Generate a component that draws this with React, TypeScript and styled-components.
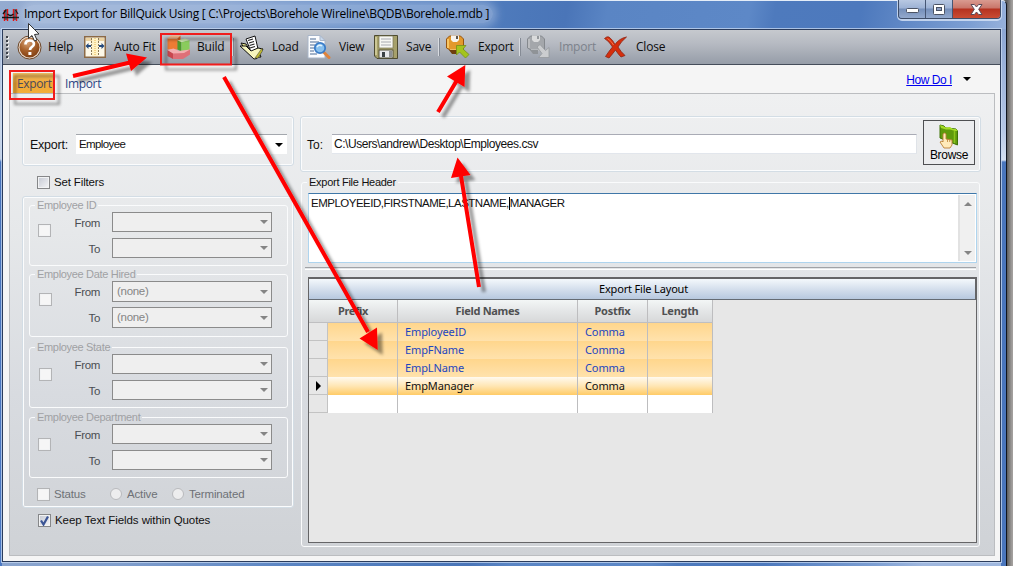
import { FC, ReactNode } from "react";
import styled, { createGlobalStyle, css } from "styled-components";

const segoe = `"Open Sans", "Noto Sans", sans-serif`;
const tahoma = `"Noto Sans", "Open Sans", sans-serif`;
const arial = `"Liberation Sans", Arial, sans-serif`;

const filters = [
  { title: "Employee ID", value: "", size: 20, height: 67, after: 2, box: 8, drop: 12 },
  { title: "Employee Date Hired", value: "(none)", size: 21, height: 69, after: 4, box: 9, drop: 12 },
  { title: "Employee State", value: "", size: 20, height: 67, after: 3, box: 9, drop: 14 },
  { title: "Employee Department", value: "", size: 20, height: 67, after: 9, box: 8, drop: 14 },
];

const fields = [
  { name: "EmployeeID", postfix: "Comma" },
  { name: "EmpFName", postfix: "Comma" },
  { name: "EmpLName", postfix: "Comma" },
  { name: "EmpManager", postfix: "Comma", current: true },
];

const App: FC = () => (
  <>
    <GlobalStyle />
    <Desktop>
      <Window>
        <TitleBar>
          <AppIcon />
          <Title>
            Import Export for BillQuick Using [ C:\Projects\Borehole
            Wireline\BQDB\Borehole.mdb ]
          </Title>
          <WindowButtons />
        </TitleBar>
        <Client>
          <Toolbar>
            <Grip>
              {[0, 1, 2, 3, 4, 5].map((dot) => (
                <GripDot key={dot} />
              ))}
            </Grip>
            <Tool width={67} gap={6} icon={<HelpIcon />} label="Help" />
            <Tool width={83} icon={<AutoFitIcon />} label="Auto Fit" />
            <Tool width={66} gap={6} icon={<BuildIcon />} label="Build" />
            <Separator />
            <Tool width={67} icon={<LoadIcon />} label="Load" />
            <Tool width={67} icon={<ViewIcon />} label="View" />
            <Tool width={65} icon={<SaveIcon />} label="Save" />
            <Separator />
            <Tool width={74} icon={<TransferIcon />} label="Export" />
            <Separator />
            <Tool width={77} icon={<TransferIcon disabled />} label="Import" disabled />
            <Tool width={67} icon={<CloseIcon />} label="Close" />
          </Toolbar>
          <Tabs>
            <Tab $active>Export</Tab>
            <Tab>Import</Tab>
            <HowDoI>How Do I</HowDoI>
            <Caret />
          </Tabs>
          <Panel>
            <LeftColumn>
              <Group $height={50}>
                <ExportLabel>Export:</ExportLabel>
                <ExportCombo>
                  Employee
                  <Caret />
                </ExportCombo>
              </Group>
              <CheckRow $top={10} $left={15} $bottom={7}>
                <Box $enabled />
                <Label $track={-0.15}>Set Filters</Label>
              </CheckRow>
              <FilterGroup>
                {filters.map((filter) => (
                  <FieldSet key={filter.title} $height={filter.height} $after={filter.after}>
                    <Legend $muted>{filter.title}</Legend>
                    <Range>
                      <RangeCheck $left={filter.box} $top={filter.drop}>
                        <Box />
                      </RangeCheck>
                      <RangeRows $size={filter.size}>
                        <RangeLabel>From</RangeLabel>
                        <Select>
                          {filter.value}
                          <Caret $muted />
                        </Select>
                        <RangeLabel>To</RangeLabel>
                        <Select>
                          {filter.value}
                          <Caret $muted />
                        </Select>
                      </RangeRows>
                    </Range>
                  </FieldSet>
                ))}
                <StatusRow>
                  <Box />
                  <StatusLabel $width={60}>Status</StatusLabel>
                  <Radio />
                  <StatusLabel $width={50}>Active</StatusLabel>
                  <Radio />
                  <StatusLabel $width={62}>Terminated</StatusLabel>
                </StatusRow>
              </FilterGroup>
              <CheckRow $top={6} $left={16} $bottom={0}>
                <Box $enabled>
                  <CheckMark />
                </Box>
                <Label $track={-0.08}>Keep Text Fields within Quotes</Label>
              </CheckRow>
            </LeftColumn>
            <RightColumn>
              <Group $height={56}>
                <ToLabel>To:</ToLabel>
                <PathInput>C:\Users\andrew\Desktop\Employees.csv</PathInput>
                <BrowseButton>
                  <BrowseIcon />
                  Browse
                </BrowseButton>
              </Group>
              <HeaderFieldSet>
                <Legend>Export File Header</Legend>
                <HeaderText>
                  <HeaderValue>
                    EMPLOYEEID,FIRSTNAME,LASTNAME,
                    <TextCaret />
                    MANAGER
                  </HeaderValue>
                  <ScrollBar>
                    <ScrollArrow $up />
                    <ScrollArrow />
                  </ScrollBar>
                </HeaderText>
                <Divider />
                <LayoutGrid>
                  <GridTitle>Export File Layout</GridTitle>
                  <GridHeader>
                    <HeadCell $span>Prefix</HeadCell>
                    <HeadCell>Field Names</HeadCell>
                    <HeadCell>Postfix</HeadCell>
                    <HeadCell>Length</HeadCell>
                  </GridHeader>
                  {fields.map((field) => (
                    <GridRow key={field.name} $tone={field.current ? "current" : "filled"}>
                      <Indicator>{field.current && <RowMarker />}</Indicator>
                      <Cell />
                      <Cell>{field.name}</Cell>
                      <Cell>{field.postfix}</Cell>
                      <Cell />
                    </GridRow>
                  ))}
                  <GridRow $tone="empty">
                    <Indicator />
                    <Cell />
                    <Cell />
                    <Cell />
                    <Cell />
                  </GridRow>
                </LayoutGrid>
              </HeaderFieldSet>
            </RightColumn>
          </Panel>
        </Client>
      </Window>
      <Annotations />
    </Desktop>
  </>
);

export default App;

interface ToolProps {
  width: number;
  gap?: number;
  icon: ReactNode;
  label: string;
  disabled?: boolean;
}

const Tool: FC<ToolProps> = ({ width, gap = 8, icon, label, disabled }) => (
  <ToolItem $width={width} $gap={gap} $disabled={disabled}>
    {icon}
    <span>{label}</span>
  </ToolItem>
);

const AppIcon: FC = () => (
  <svg width="17" height="14" viewBox="0 0 17 14">
    <path d="M2.500 2v11M5.500 1v12M11.500 1v12M14.500 1v12" stroke="#e81010" strokeWidth="1.400" />
    <path d="M0 9.500h17M5.500 6q3 3 6 0M1 6l3-4M16 6l-2.500-4" stroke="#111" strokeWidth="1.300" fill="none" />
    <path d="M4 1v11M13 1v11" stroke="#222" />
  </svg>
);

const WindowButtons: FC = () => (
  <Controls>
    <Control $width={27}>
      <svg width="13" height="5">
        <rect x=".5" y=".5" width="12" height="4" rx="1" fill="#fff" stroke="#4b5364" />
      </svg>
    </Control>
    <Control $width={27}>
      <svg width="12" height="11">
        <rect x=".5" y=".5" width="11" height="10" rx="1" fill="#fff" stroke="#4b5364" />
        <rect x="3.5" y="3.5" width="5" height="3" fill="#8ea0c4" stroke="#4b5364" />
      </svg>
    </Control>
    <Control $width={47} $close>
      <svg width="13" height="11" viewBox="0 0 13 11">
        <path d="M1 .5h3.400L6.500 3 8.600 .5H12L8.700 5.300 12 10.500H8.600L6.500 8 4.400 10.500H1L4.300 5.300z" fill="#fff" stroke="#5a4a58" />
      </svg>
    </Control>
  </Controls>
);

const HelpIcon: FC = () => (
  <svg width="25" height="25" viewBox="0 0 25 25">
    <defs>
      <radialGradient id="help" cx=".4" cy=".25" r=".8">
        <stop offset="0" stopColor="#d9a478" />
        <stop offset=".5" stopColor="#a8622c" />
        <stop offset="1" stopColor="#7d3c10" />
      </radialGradient>
    </defs>
    <circle cx="12.500" cy="12.500" r="11.500" fill="#e8dcd0" stroke="#6a4426" />
    <circle cx="12.500" cy="12.500" r="10" fill="url(#help)" />
    <path d="M8.500 9.500q0-4 4.200-4t4.200 3.400q0 1.900-2.200 3.200-1.700 1-1.700 2.900" stroke="#fff" strokeWidth="2.700" fill="none" />
    <rect x="11.400" y="17" width="3" height="3" fill="#fff" />
  </svg>
);

const AutoFitIcon: FC = () => (
  <svg width="22" height="22" viewBox="0 0 22 22">
    <rect x=".75" y=".75" width="20.500" height="20.500" fill="#fdf8e8" stroke="#8c6a46" strokeWidth="1.500" />
    <rect x="2" y="2" width="18" height="3" fill="#ecd3a2" />
    <path d="M8 2h6v18H8z" fill="#fff3c8" />
    <path d="M7.500 2v18M14.500 2v18" stroke="#8d7c58" strokeDasharray="2 1" />
    <path d="M11 2v18" stroke="#e5b650" strokeDasharray="1 1" />
    <path d="M1.500 10l3-3v2H7v2H4.500v2zM20.500 10l-3-3v2H15v2h2.500v2z" fill="#24497d" />
  </svg>
);

const BuildIcon: FC = () => (
  <svg width="24" height="24" viewBox="0 0 24 24">
    <path d="M.5 3.500h10v11h-10z" fill="#ee7c34" />
    <path d="M.5 3.500L4 .5h9.500l-3 3z" fill="#f5b284" />
    <path d="M10.500 3.500l3-3V12l-3 2.500z" fill="#d8621e" />
    <path d="M10.500 5.500l4 1.500v9.500l-4-2z" fill="#4d9a2c" />
    <path d="M14.500 7l8-2v10l-8 1.500z" fill="#8acc5c" />
    <path d="M10.500 5.500L18 3.500l4.500 1.500-8 2z" fill="#d2efb4" />
    <path d="M.5 15l5.500 3v6L.5 21z" fill="#c8474e" />
    <path d="M6 18l17-3.500v5L16 24H6z" fill="#de7078" />
    <path d="M.5 15l6-1.500L12 16l11-1.500L17 18 6 18.500z" fill="#f3aeb0" />
  </svg>
);

const LoadIcon: FC = () => (
  <svg width="24" height="25" viewBox="0 0 24 25">
    <path d="M1 8l5 1 3 5 9 1 3 7-7 .5L6 16z" fill="#e9e88f" stroke="#111" />
    <path d="M6 4l9-3 3 13-7 3z" fill="#fff" stroke="#111" />
    <path d="M8 5.500l5-1.500M9 8l5-1.500M9.500 10.500l5-1.500M10 13l5-1.500" stroke="#222" strokeWidth="1.200" />
    <path d="M0 11h6l5 5 7-3 5 1-6 9.500-3 .5z" fill="#f6f5be" stroke="#111" />
    <path d="M15 23l7-10 .5 3-4.500 7z" fill="#bdb82e" stroke="#444" strokeWidth=".5" />
  </svg>
);

const ViewIcon: FC = () => (
  <svg width="24" height="24" viewBox="0 0 24 24">
    <path d="M1 .5h12l5 5v17.500H1z" fill="#fbfcfe" stroke="#a8b5c8" />
    <path d="M13 .5v5h5z" fill="#c9d9ec" stroke="#a8b5c8" />
    <path d="M3 4h6M3 7h9M3 10h5M3 13h4M3 16h4M3 19h7" stroke="#879bb8" strokeWidth="1.300" />
    <path d="M16.500 17l5.500 5.500" stroke="#e0833b" strokeWidth="3" strokeLinecap="round" />
    <circle cx="13" cy="13" r="5.200" fill="#88c0ee" stroke="#3a7cc8" strokeWidth="1.800" />
    <path d="M10 12q2-3 5-1" stroke="#e5f5ff" strokeWidth="1.500" fill="none" />
  </svg>
);

const SaveIcon: FC = () => (
  <svg width="24" height="24" viewBox="0 0 24 24">
    <path d="M.5 .5h23v23H3l-2.500-2.500z" fill="#a6a06a" stroke="#4d4a30" />
    <path d="M2 2v18" stroke="#d8d4a4" strokeWidth="1.500" />
    <rect x="5" y="1" width="14" height="12" fill="#f7f7f3" stroke="#777454" strokeWidth=".7" />
    <path d="M7 4h10M7 7h10M7 10h10" stroke="#a8aab0" />
    <rect x="5" y="15" width="14" height="8" fill="#e8e9ec" stroke="#54523a" />
    <path d="M8 17h3v5H8z" fill="#3b4245" />
    <path d="M15 16h3v6h-3z" fill="#8e9192" />
  </svg>
);

const TransferIcon: FC<{ disabled?: boolean }> = ({ disabled }) => (
  <svg width="24" height="24" viewBox="0 0 24 24">
    <path
      d="M.5 4l3-3h11l3 3v11H4l-3.500-2z"
      fill={disabled ? "#a4a7ab" : "#e3992c"}
      stroke={disabled ? "#85898e" : "#965410"}
    />
    <path d="M2 4v9M4 15h9" stroke={disabled ? "#c2c5c8" : "#ffd375"} strokeWidth="1.500" />
    <path d="M5 .5h8V5l-2 2H7L5 5z" fill={disabled ? "#dadbdc" : "#f7f4ee"} />
    <path d="M10 1h2v3h-2z" fill={disabled ? "#94989c" : "#5c554c"} />
    <path d="M3 15h8v4H6z" fill={disabled ? "#8f9397" : "#6f3e0d"} />
    {disabled ? (
      <path d="M10 12l3-2.500 5.500 6 3.500-3V22.500H11.500l3.500-4z" fill="#cbcdcf" stroke="#95999d" strokeWidth=".8" />
    ) : (
      <path d="M10.500 10.500H20l-3 3.500 6 5.500-3.500 3.500-6-6-3 3z" fill="#a4c41c" stroke="#75901a" strokeWidth=".8" />
    )}
  </svg>
);

const CloseIcon: FC = () => (
  <svg width="24" height="24" viewBox="0 0 24 24">
    <path d="M.5 3.500Q3 1 5 2q4 3 6 7.500Q15 3.500 22.500 2 17 6.500 14 12q3 5 7 8.500l-4 1.500q-3-3-5.500-7-3 4-6.500 8L1.500 21.500Q5 16 8.500 12 5 6 .5 3.500z" fill="#d52e0c" stroke="#8e2414" strokeWidth=".8" />
    <path d="M3.500 3.500q4 2.500 6 6.500" stroke="#f37a50" fill="none" />
  </svg>
);

const CheckMark: FC = () => (
  <svg width="9" height="10" viewBox="0 0 9 10">
    <path d="M1 4.500l2.500 4L8 .5" stroke="#3b5595" strokeWidth="2.200" fill="none" />
  </svg>
);

const BrowseIcon: FC = () => (
  <svg width="20" height="25" viewBox="0 0 20 25">
    <path d="M1 1l4 1 2 2 10 1 1.500 2v14L1 14z" fill="#5f9a0c" stroke="#3f7406" />
    <path d="M1 1l4 1.500 2 1 4-.5 3 2 3 0 1.500 2-2.500 0-5-1.500-4 0L2 4z" fill="#a5dc26" />
    <path d="M15.500 7v12" stroke="#8cc41c" strokeWidth="1.500" />
    <path d="M4 10q2-2 3 0v5l6 1v5l-2 3H5l-4-6 2-1 1 1z" fill="#ffeaba" stroke="#b98036" strokeWidth=".9" />
    <path d="M8.500 15v3M10.700 15.500v2.500" stroke="#b98036" strokeWidth=".8" />
  </svg>
);

const Annotations: FC = () => (
  <Overlay width="1013" height="566">
    <defs>
      <filter id="drop" x="-20%" y="-20%" width="150%" height="150%">
        <feDropShadow dx="5" dy="5" stdDeviation="1.800" floodColor="#000" floodOpacity=".4" />
      </filter>
    </defs>
    <g filter="url(#drop)" fill="none" stroke="#f01c1c" strokeWidth="2">
      <rect x="161" y="34" width="70" height="30.500" />
      <rect x="10" y="71" width="44" height="28" />
    </g>
    <g filter="url(#drop)" fill="#ff0000" stroke="#ff0000">
      <path d="M73 76L130 62.500M224 77L368 332M479 287L461 176M438 112L456.500 81" strokeWidth="4" />
      <path
        d="M147 57.500L126 53.500 131 71zM377.700 350L359.500 338.500 377 327.500zM457.500 157.500L451 178 470.500 175zM465.300 65L447 76.500 464.500 87z"
        stroke="none"
      />
    </g>
    <path d="M28.500 23.500v15l3.500-3 2.500 5.500 2.500-1-2.500-5.500 4.500-.5z" fill="#fff" stroke="#333" />
  </Overlay>
);

const GlobalStyle = createGlobalStyle`
  * {
    box-sizing: border-box;
  }

  body {
    margin: 0;
    overflow: hidden;
  }

  svg {
    display: block;
    flex: none;
  }
`;

const Desktop = styled.div`
  position: relative;
  width: 1013px;
  height: 566px;
  background: linear-gradient(90deg, #5e5e5e 1007px, #a29f9d 1012px);
  font: 11.5px/13px ${arial};
  color: #111;
`;

const Overlay = styled.svg`
  position: absolute;
  inset: 0;
  pointer-events: none;
`;

const Window = styled.div`
  display: flex;
  flex-direction: column;
  width: 1007px;
  height: 566px;
  padding: 0 5px 0 2px;
  border-right: 1px solid #10151f;
  border-top: 1px solid #e4edf8;
  border-top-right-radius: 5px;
  background:
    linear-gradient(180deg, #8ca6d3 0, #b5c7e6 100px, #d4dff0 131px, #4a76bd 133px) right 28px / 5px 100% no-repeat,
    linear-gradient(180deg, #a7bad8 0, #c8d5e8 100px, #c2d0e5 130px, #4672ba 133px, #4a78c4 100%) left 28px / 2px 100% no-repeat,
    linear-gradient(100deg, #94abd0 0, #7f9dcc 220px, #5b85c3 380px, #4c78ba 520px, #4a75b8 560px, #5a85c4 600px, #5d88c7 740px, #4e7abd 765px, #4d79bd 850px, #7d9fd3 960px, #9fb7de 1007px);
`;

const TitleBar = styled.div`
  display: flex;
  align-items: center;
  height: 28px;
  flex: none;
`;

const Title = styled.div`
  margin: -2px 0 0 5px;
  padding: 0 4px 0 0;
  font: 12px/18px ${segoe};
  letter-spacing: -0.26px;
  white-space: nowrap;
  color: #000;
  border-radius: 9px;
  background: rgba(200, 215, 238, 0.4);
  box-shadow: 0 0 8px 4px rgba(200, 215, 238, 0.4);
`;

const Controls = styled.div`
  display: flex;
  align-self: flex-start;
  height: 19px;
  margin: -1px 0 0 auto;
  border: 1px solid #3e4d68;
  border-top: 0;
  border-radius: 0 0 4px 4px;
  box-shadow: 0 1px 0 1px rgba(215, 228, 246, 0.8);
  overflow: hidden;
`;

const Control = styled.div<{ $width: number; $close?: boolean }>`
  display: flex;
  align-items: center;
  justify-content: center;
  width: ${(props) => props.$width}px;
  border-right: ${(props) => (props.$close ? 0 : "1px solid #465674")};
  background: ${(props) =>
    props.$close
      ? "linear-gradient(180deg, #d99b90 0, #c9766a 8px, #b53220 9px, #c94c34 100%)"
      : "linear-gradient(180deg, #b8c8e2 0, #9db2d5 8px, #758fba 9px, #93a9cd 100%)"};

  &:first-child {
    align-items: flex-end;
    padding-bottom: 5px;
  }
`;

const Client = styled.div`
  display: flex;
  flex-direction: column;
  width: 999px;
  height: 533px;
  border: 1px solid #2b3c5c;
  background: #f5f5f5;
  box-shadow: 0 0 0 1px rgba(200, 217, 242, 0.75);
`;

const Toolbar = styled.div`
  display: flex;
  align-items: center;
  flex: none;
  height: 35px;
  border-bottom: 1px solid #454d5a;
  background: linear-gradient(180deg, #c6c9ce, #b6bac2 40%, #969da8);
`;

const Grip = styled.div`
  display: flex;
  flex-direction: column;
  gap: 2px;
  width: 11px;
  margin-left: 3px;
`;

const GripDot = styled.i`
  width: 2px;
  height: 2px;
  background: #3d424a;
  box-shadow: 1px 1px 0 #eee;
`;

const ToolItem = styled.div<{ $width: number; $gap: number; $disabled?: boolean }>`
  display: flex;
  align-items: center;
  gap: ${(props) => props.$gap}px;
  width: ${(props) => props.$width}px;
  flex: none;
  font: 12px/16px ${segoe};
  letter-spacing: -0.2px;
  white-space: nowrap;
  color: ${(props) => (props.$disabled ? "#7c828b" : "#0c0c0c")};
`;

const Separator = styled.i`
  width: 2px;
  height: 18px;
  margin-right: 6px;
  margin-left: -1px;
  border-left: 1px solid #d8dbe0;
  background: #858b95;
`;

const Tabs = styled.div`
  display: flex;
  align-items: center;
  flex: none;
  height: 28px;
  padding: 0 29px 0 9px;
`;

const Tab = styled.div<{ $active?: boolean }>`
  width: ${(props) => (props.$active ? 42 : 60)}px;
  height: 21px;
  margin: 8px 0 0;
  padding-left: ${(props) => (props.$active ? 4 : 11)}px;
  font: 12px/21px ${segoe};
  letter-spacing: -0.35px;
  color: #2c4484;
  ${(props) =>
    props.$active &&
    css`
      color: #4a4a5a;
      border-left: 1px solid #dfeef2;
      background: linear-gradient(180deg, #f8c266, #efa736 50%, #f3ae3a);
    `}
`;

const HowDoI = styled.a`
  margin: 2px 11px 0 auto;
  color: #0000ee;
  font-size: 12px;
  letter-spacing: -0.45px;
  text-decoration: underline;
`;

const Caret = styled.i<{ $muted?: boolean }>`
  width: 0;
  height: 0;
  border: 4px solid transparent;
  border-top-color: ${(props) => (props.$muted ? "#858585" : "#000")};
  border-bottom: 0;
`;

const Panel = styled.div`
  display: flex;
  gap: 6px;
  width: 986px;
  height: 463px;
  margin-left: 6px;
  padding: 22px 12px 0;
  border: 1px solid #bbbdc0;
  background: linear-gradient(180deg, #eff0f1 0, #e6e8ea 30%, #d8dbe0 65%, #cfd2d6 100%);
`;

const LeftColumn = styled.div`
  width: 272px;
`;

const RightColumn = styled.div`
  width: 681px;
`;

const etched = css`
  border: 1px solid #d3dde5;
  border-radius: 3px;
  box-shadow: inset 0 0 0 1px #fbfcfd;
`;

const Group = styled.div<{ $height: number }>`
  display: flex;
  height: ${(props) => props.$height}px;
  ${etched}
`;

const Label = styled.span<{ $track?: number }>`
  white-space: nowrap;
  letter-spacing: ${(props) => props.$track || 0}px;
`;

const ExportLabel = styled.span`
  width: 46px;
  margin: 22px 0 0 7px;
  font-size: 12.5px;
  letter-spacing: -0.25px;
`;

const ExportCombo = styled.div`
  display: flex;
  align-items: center;
  justify-content: space-between;
  width: 211px;
  height: 20px;
  margin-top: 17px;
  padding: 0 4px 0 3px;
  border-top: 1px solid #a3a7ad;
  background: #fff;
  letter-spacing: -0.6px;
`;

const CheckRow = styled.div<{ $top: number; $left: number; $bottom: number }>`
  display: flex;
  align-items: center;
  gap: 4px;
  padding: ${(props) => `${props.$top}px 0 ${props.$bottom}px ${props.$left}px`};
`;

const Box = styled.div<{ $enabled?: boolean }>`
  display: flex;
  align-items: center;
  justify-content: center;
  flex: none;
  width: 13px;
  height: 13px;
  border: 1px solid ${(props) => (props.$enabled ? "#868789" : "#b3b4b6")};
  background: ${(props) =>
    props.$enabled ? "linear-gradient(135deg, #c4c8d2, #f6f6f8)" : "#f6f6f6"};
  box-shadow: inset 0 0 0 1px #f2f3f4;
`;

const FilterGroup = styled.div`
  height: 312px;
  padding: 2px 5px 0 6px;
  ${etched}
`;

const FieldSet = styled.fieldset<{ $height: number; $after: number }>`
  min-width: 0;
  height: ${(props) => props.$height}px;
  margin: 0 0 ${(props) => props.$after}px;
  padding: 0;
  border: 1px solid #fafbfc;
  border-radius: 3px;
`;

const Legend = styled.legend<{ $muted?: boolean }>`
  height: 13px;
  margin-left: 5px;
  padding: 0 2px;
  font-size: 11px;
  letter-spacing: ${(props) => (props.$muted ? -0.32 : -0.27)}px;
  color: ${(props) => (props.$muted ? "#a0a1a4" : "#111")};
`;

const Range = styled.div`
  display: flex;
`;

const RangeCheck = styled.div<{ $left: number; $top: number }>`
  width: 22px;
  padding: ${(props) => `${props.$top}px 0 0 ${props.$left}px`};
`;

const RangeRows = styled.div<{ $size: number }>`
  display: grid;
  grid-template-columns: 48px 160px;
  grid-auto-rows: ${(props) => props.$size}px;
  row-gap: ${(props) => 26 - props.$size}px;
  column-gap: 12px;
`;

const RangeLabel = styled.span`
  padding-top: 5px;
  text-align: right;
  letter-spacing: -0.35px;
  color: #4a4d52;
`;

const Select = styled.div`
  display: flex;
  align-items: center;
  border: 1px solid #8b8b8b;
  padding: 0 3px 0 4px;
  background: #efefef;
  color: #858585;
  letter-spacing: -0.3px;

  ${Caret} {
    margin-left: auto;
  }
`;

const StatusRow = styled.div`
  display: flex;
  align-items: center;
  padding-left: 8px;
`;

const StatusLabel = styled.span<{ $width: number }>`
  width: ${(props) => props.$width}px;
  padding: 1px 0 0 5px;
  letter-spacing: -0.15px;
  color: #6e7176;

  ${Box} + & {
    padding-left: 4px;
  }
`;

const Radio = styled.i`
  width: 12px;
  height: 12px;
  border: 1px solid #b9babd;
  border-radius: 50%;
  background: #ededee;
  flex: none;
`;

const ToLabel = styled.span`
  width: 25px;
  margin: 22px 0 0 6px;
  font-size: 12px;
`;

const PathInput = styled.div`
  width: 585px;
  height: 20px;
  margin-top: 17px;
  padding: 3px 0 0 2px;
  border-top: 1px solid #a9abb5;
  border-right: 1px solid #dfe3e8;
  border-bottom: 1px solid #e2e6ec;
  background: #fff;
  font-size: 12px;
  letter-spacing: -0.45px;
`;

const BrowseButton = styled.button`
  display: flex;
  flex-direction: column;
  align-items: center;
  width: 52px;
  height: 45px;
  margin: 3px 0 0 6px;
  padding: 3px 0 0;
  border: 1px solid #4e4f52;
  background: #ebecee;
  font: 12px/12px ${arial};
  letter-spacing: -0.3px;
  color: #000;
`;

const HeaderFieldSet = styled.fieldset`
  min-width: 0;
  height: 371px;
  margin: 4px 1px 0;
  padding: 4px 3px 0;
  border: 1px solid #fafbfc;
  border-radius: 3px;

  ${Legend} {
    margin-left: 2px;
  }
`;

const HeaderText = styled.div`
  display: flex;
  height: 70px;
  width: 669px;
  margin-left: 3px;
  border: 1px solid #aed4ee;
  border-top-color: #3f77a8;
  background: #fff;
`;

const HeaderValue = styled.div`
  display: flex;
  flex: 1;
  padding: 3px 0 0 2px;
  letter-spacing: -0.5px;
`;

const TextCaret = styled.i`
  width: 1px;
  height: 13px;
  background: #000;
`;

const ScrollBar = styled.div`
  display: flex;
  flex-direction: column;
  justify-content: space-between;
  align-items: center;
  width: 17px;
  margin: 1px;
  padding: 7px 0 6px;
  border-left: 2px solid #e2e2e2;
  background: #f0f0f0;
`;

const ScrollArrow = styled.i<{ $up?: boolean }>`
  border: 4px solid transparent;
  ${(props) =>
    props.$up
      ? "border-bottom-color: #858585; border-top: 0;"
      : "border-top-color: #858585; border-bottom: 0;"}
`;

const Divider = styled.div`
  height: 3px;
  margin: 4px 0 7px;
  border-top: 1px solid #a0a2a6;
  border-bottom: 1px solid #fff;
`;

const LayoutGrid = styled.div`
  width: 669px;
  height: 266px;
  margin-left: 3px;
  border: 1px solid #656567;
  border-top-width: 2px;
  background: #e7e7e7;
  font: 11px/17px ${tahoma};
  letter-spacing: -0.1px;
`;

const GridTitle = styled.div`
  height: 21px;
  padding-left: 3px;
  border-bottom: 1px solid #656b74;
  border-right: 1px solid #656567;
  background: linear-gradient(180deg, #f4f8fc, #d5dfed 50%, #b7c8df);
  text-align: center;
  line-height: 19px;
  letter-spacing: -0.17px;
  color: #000;
`;

const columns = css`
  display: grid;
  grid-template-columns: 19px 70px 180px 70px 65px;
  width: 404px;
`;

const GridHeader = styled.div`
  ${columns}
  height: 23px;
  border-bottom: 1px solid #bfbfc1;
  background: linear-gradient(180deg, #f3f6f6, #e4e6e7 50%, #d7d8d9);
`;

const HeadCell = styled.div<{ $span?: boolean }>`
  grid-column: ${(props) => (props.$span ? "span 2" : "auto")};
  border-right: 1px solid #bdbdbf;
  text-align: center;
  line-height: 22px;
  font-weight: 700;
  letter-spacing: -0.3px;
  color: #505152;
`;

const Indicator = styled.div`
  display: flex;
  align-items: center;
  padding-left: 7px;
  border-right: 1px solid #c3c3c3;
  border-bottom: 1px solid #c3c3c3;
  background: #e7e7e7;
`;

const RowMarker = styled.i`
  border: 5px solid transparent;
  border-left-color: #000;
  border-right: 0;
`;

const Cell = styled.div`
  padding-left: 7px;
  border-right: 1px solid #bdbdbf;
`;

const tones = {
  filled: "linear-gradient(180deg, #ffd68c, #ffe2ad)",
  current: "linear-gradient(180deg, #fffaf0, #ffe6b4 50%, #ffcb66)",
  empty: "#fff",
};

const GridRow = styled.div<{ $tone: keyof typeof tones }>`
  ${columns}
  height: 18px;
  background: ${(props) => tones[props.$tone]};
  color: ${(props) => (props.$tone === "filled" ? "#1d46c0" : "#111")};
`;
